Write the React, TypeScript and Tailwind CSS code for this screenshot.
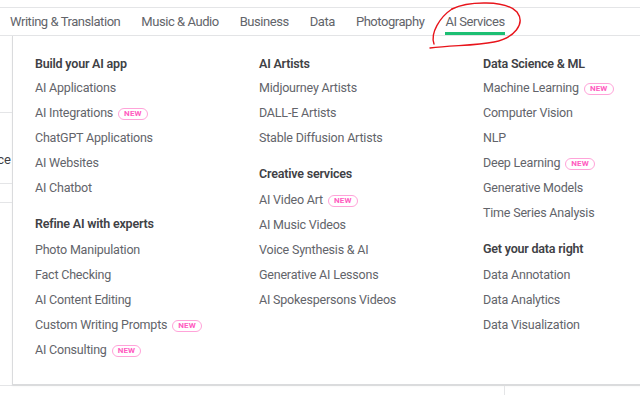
import React from 'react';

type Item = { label: string; isNew?: boolean };
type Section = { title: string; items: Item[] };

const NAV = ['Writing & Translation', 'Music & Audio', 'Business', 'Data', 'Photography', 'AI Services'];

const COLUMNS: Section[][] = [
  [
    {
      title: 'Build your AI app',
      items: [
        { label: 'AI Applications' },
        { label: 'AI Integrations', isNew: true },
        { label: 'ChatGPT Applications' },
        { label: 'AI Websites' },
        { label: 'AI Chatbot' },
      ],
    },
    {
      title: 'Refine AI with experts',
      items: [
        { label: 'Photo Manipulation' },
        { label: 'Fact Checking' },
        { label: 'AI Content Editing' },
        { label: 'Custom Writing Prompts', isNew: true },
        { label: 'AI Consulting', isNew: true },
      ],
    },
  ],
  [
    {
      title: 'AI Artists',
      items: [{ label: 'Midjourney Artists' }, { label: 'DALL-E Artists' }, { label: 'Stable Diffusion Artists' }],
    },
    {
      title: 'Creative services',
      items: [
        { label: 'AI Video Art', isNew: true },
        { label: 'AI Music Videos' },
        { label: 'Voice Synthesis & AI' },
        { label: 'Generative AI Lessons' },
        { label: 'AI Spokespersons Videos' },
      ],
    },
  ],
  [
    {
      title: 'Data Science & ML',
      items: [
        { label: 'Machine Learning', isNew: true },
        { label: 'Computer Vision' },
        { label: 'NLP' },
        { label: 'Deep Learning', isNew: true },
        { label: 'Generative Models' },
        { label: 'Time Series Analysis' },
      ],
    },
    {
      title: 'Get your data right',
      items: [{ label: 'Data Annotation' }, { label: 'Data Analytics' }, { label: 'Data Visualization' }],
    },
  ],
];

const NewBadge = () => (
  <span className="ml-[5px] inline-flex h-[12px] items-center rounded-full border border-[#ffa3d9] px-[5px] text-[8px] font-bold leading-none tracking-[0.02em] text-[#ff5cbf]">
    NEW
  </span>
);

export default function App() {
  return (
    <div className="relative h-[395px] w-[640px] overflow-hidden bg-white font-['Roboto',sans-serif]">
      {/* Category nav */}
      <nav className="mt-[7px] flex h-[29px] items-stretch gap-[21px] border-y border-[#e4e5e7] pl-[10px] text-[13px] tracking-[-0.45px] text-[#62646a]">
        {NAV.map((n) => (
          <div key={n} className={`relative flex items-center ${n === 'AI Services' ? 'border-b-[3px] border-[#1dbf73] pt-[3px]' : ''}`}>
            {n}
          </div>
        ))}
      </nav>

      <div className="flex">
        {/* page content peeking out behind the menu */}
        <div className="relative h-[349px] w-[12px] shrink-0">
          <div className="absolute left-0 top-[76px] h-px w-full bg-[#e4e5e7]" />
          <div className="absolute left-0 top-[147px] h-px w-full bg-[#e4e5e7]" />
          <div className="absolute left-0 top-[166px] h-px w-full bg-[#e4e5e7]" />
          <span className="absolute right-[1px] top-[114px] text-[13px] text-[#404145]">ce</span>
        </div>

        {/* Dropdown menu */}
        <div className="h-[349px] flex-1 border-b border-l border-[#dadbdd] bg-white pl-[22px] pt-[15px] shadow-[0_1px_2px_rgba(0,0,0,0.06)]">
          <div className="grid grid-cols-[224px_224px_224px] text-[12.5px] tracking-[-0.2px]">
            {COLUMNS.map((col, ci) => (
              <div key={ci}>
                {col.map((s, si) => (
                  <div key={s.title} className={si > 0 ? 'mt-[10px]' : ''}>
                    <div className={`h-[25px] leading-[25px] font-semibold text-[#404145] ${si > 0 ? 'mb-[2px]' : ''}`}>
                      {s.title}
                    </div>
                    {s.items.map((it) => (
                      <div key={it.label} className="flex h-[25px] items-center whitespace-nowrap text-[#62646a]">
                        {it.label}
                        {it.isNew && <NewBadge />}
                      </div>
                    ))}
                  </div>
                ))}
              </div>
            ))}
          </div>
        </div>
      </div>

      {/* page content below the menu */}
      <div className="flex h-[10px] border-t border-[#e4e5e7]">
        <div className="w-[505px] border-r border-[#e4e5e7]" />
      </div>

      {/* red hand-drawn annotation */}
      <svg className="pointer-events-none absolute left-0 top-0" width="640" height="60" viewBox="0 0 640 60" fill="none">
        <path
          d="M452 9 C468 1, 506 0, 517 12 C526 24, 514 38, 494 42 C474 46, 452 45, 430 48"
          stroke="#e8141b"
          strokeWidth="1.4"
          strokeLinecap="round"
        />
        <path d="M452 9 C440 17, 430 33, 434 44" stroke="#e8141b" strokeWidth="1.4" strokeLinecap="round" />
      </svg>
    </div>
  );
}
